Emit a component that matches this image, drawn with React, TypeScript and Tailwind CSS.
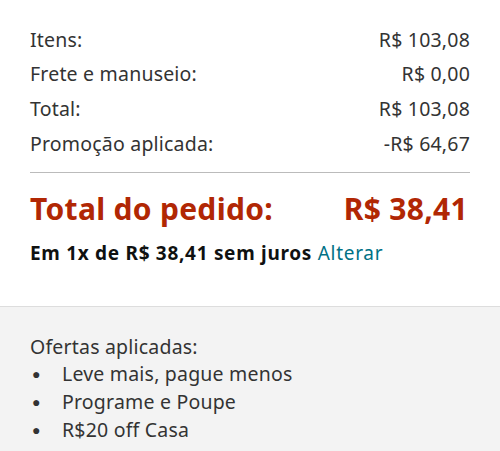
const rows = [
  {label: "Itens:", value: "R$ 103,08"},
  {label: "Frete e manuseio:", value: "R$ 0,00"},
  {label: "Total:", value: "R$ 103,08"},
  {label: "Promoção aplicada:", value: "-R$ 64,67"},
];

const ofertas = ["Leve mais, pague menos", "Programe e Poupe", "R$20 off Casa"];

export default function App() {
  return (
    <div className="flex h-[451px] w-[500px] flex-col bg-white font-['Noto_Sans',sans-serif] text-[#0f1111]">
      <div className="px-[30px] pt-[22px]">
        <div className="flex flex-col">
          {rows.map((row) => (
            <div key={row.label} className="flex h-[34.7px] items-center justify-between text-[19.5px] tracking-[0.2px] text-[#333]">
              <span>{row.label}</span>
              <span>{row.value}</span>
            </div>
          ))}
        </div>
        <div className="mt-[11px] border-t border-[#bbb]" />
        <div className="mt-[17px] flex items-center justify-between text-[30px] font-bold leading-[38px] tracking-[0.3px] text-[#b12704]">
          <span>Total do pedido:</span>
          <span className="pr-[2px]">R$ 38,41</span>
        </div>
        <p className="mt-[12px] text-[19px] leading-[26px] tracking-[0.7px]">
          <span className="font-bold">Em 1x de R$ 38,41 sem juros</span>{" "}
          <span className="text-[#007185]">Alterar</span>
        </p>
      </div>
      <div className="mt-[40px] flex-1 border-t border-[#ddd] bg-[#f3f3f3] px-[30px] pt-[26px] text-[19.5px] leading-[28px] tracking-[0.2px] text-[#333]">
        <p className="mb-[-1px]">Ofertas aplicadas:</p>
        <ul>
          {ofertas.map((o) => (
            <li key={o} className="flex items-center">
              <span className="w-[32px] pl-[2px] text-[14px]">●</span>
              <span>{o}</span>
            </li>
          ))}
        </ul>
      </div>
    </div>
  );
}
